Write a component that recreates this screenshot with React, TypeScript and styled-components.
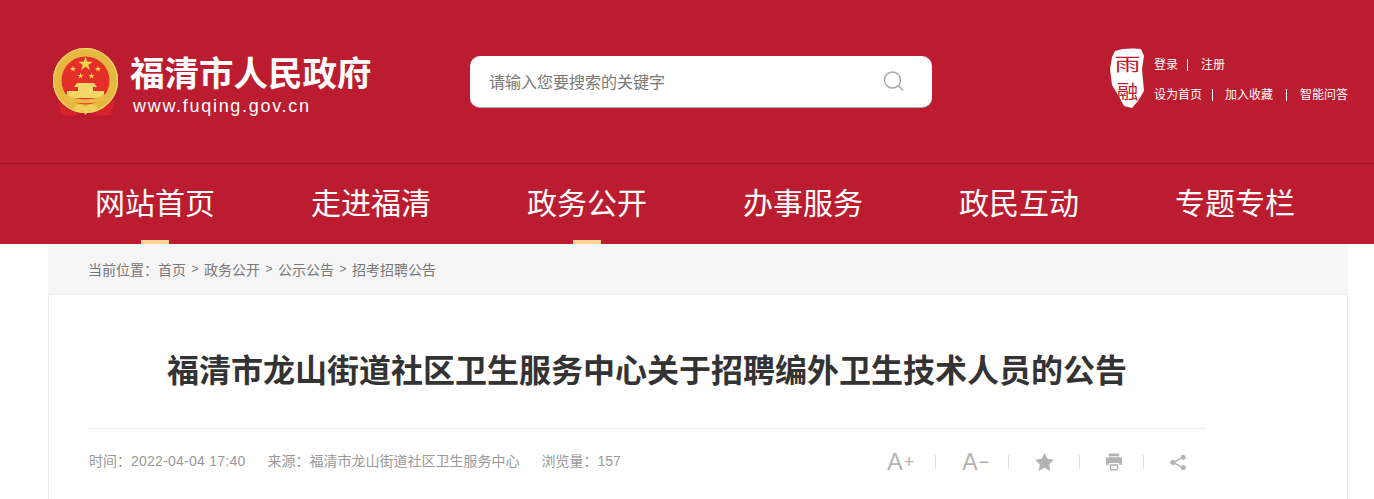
import React from 'react';
import styled, { createGlobalStyle } from 'styled-components';

const GlobalStyle = createGlobalStyle`
  html, body {
    margin: 0;
    padding: 0;
    background: #fff;
  }
  body {
    font-family: "Liberation Sans", "Noto Sans CJK SC", sans-serif;
    overflow: hidden;
  }
  a {
    color: inherit;
    text-decoration: none;
  }
`;

const Page = styled.div`
  height: 499px;
  overflow: hidden;
`;

const Top = styled.header`
  background: #bc1c2f;
`;

const TopInner = styled.div`
  box-sizing: border-box;
  padding: 0 26px 0 52px;
  display: flex;
  align-items: flex-start;
  border-bottom: 1px solid #a01525;
  height: 164px;
`;

const Brand = styled.div`
  display: flex;
  width: 418px;
  padding-top: 47px;
`;

const BrandText = styled.div`
  margin-left: 11px;
  color: #fff;
`;

const BrandName = styled.div`
  font-size: 34.5px;
  line-height: 50px;
  margin-top: 2px;
  font-weight: 700;
  white-space: nowrap;
`;

const BrandUrl = styled.div`
  font-size: 18px;
  line-height: 20px;
  letter-spacing: 1.7px;
  margin: -3px 0 0 3px;
  white-space: nowrap;
`;

const SearchBox = styled.div`
  width: 462px;
  height: 52px;
  margin-top: 56px;
  box-sizing: border-box;
  padding: 0 28px 2px 19px;
  background: #fff;
  border-bottom: 1px solid #aaa;
  border-radius: 10px;
  display: flex;
  align-items: center;
  justify-content: space-between;
  font-size: 16px;
  color: #777;
`;

const Links = styled.div`
  display: flex;
  margin-left: auto;
  padding-top: 47px;
`;

const LinkRows = styled.div`
  margin-left: 9px;
  padding-top: 4px;
  color: #fff;
  font-size: 12px;
`;

const LinkRow = styled.div`
  display: flex;
  height: 30px;
  line-height: 28px;
  white-space: nowrap;
`;

const Bar = styled.i<{ $left: number; $right: number }>`
  width: 1px;
  height: 12px;
  margin: 8px ${p => p.$right}px 0 ${p => p.$left}px;
  background: #fff;
`;

const Nav = styled.nav`
  display: grid;
  grid-template-columns: repeat(6, 216px);
  padding-left: 47px;
  height: 80px;
`;

const NavItem = styled.a<{ $active?: boolean }>`
  position: relative;
  text-align: center;
  font-size: 30px;
  line-height: 80px;
  color: #fff;
  white-space: nowrap;

  &::after {
    content: '';
    display: ${p => (p.$active ? 'block' : 'none')};
    position: absolute;
    left: 50%;
    bottom: 0;
    width: 28px;
    height: 4px;
    margin-left: -14px;
    background: #ffd48c;
  }
`;

const Main = styled.main`
  width: 1300px;
  margin-left: 48px;
`;

const Crumbs = styled.div`
  height: 51px;
  box-sizing: border-box;
  padding-left: 40px;
  background: #f6f6f6;
  border-bottom: 1px solid #ececec;
  display: flex;
  align-items: center;
  font-size: 14px;
  color: #777;
`;

const CrumbSep = styled.span`
  width: 18px;
  text-align: center;
  font-size: 12px;
`;

const Article = styled.article`
  box-sizing: border-box;
  height: 300px;
  padding: 0 141px 0 40px;
  border: 1px solid #ececec;
  border-top: 0;
`;

const Title = styled.h1`
  margin: 0;
  height: 134px;
  box-sizing: border-box;
  padding: 51px 1px 0 0;
  border-bottom: 1px solid #ececec;
  font-size: 32px;
  line-height: 50px;
  font-weight: 700;
  color: #333;
  text-align: center;
  white-space: nowrap;
`;

const Meta = styled.div`
  display: flex;
  align-items: center;
  height: 62px;
  font-size: 14px;
  color: #999;
`;

const MetaItem = styled.span`
  margin-right: 22px;
  white-space: nowrap;
`;

const MetaTime = styled.span`
  letter-spacing: 0.25px;
`;

const Tools = styled.div`
  display: flex;
  align-items: center;
  margin: 4px 20px 0 auto;
  color: #b3b3b3;
`;

const Tool = styled.span<{ $pad?: number }>`
  display: flex;
  align-items: center;
  height: 14px;
  padding-right: ${p => p.$pad ?? 0}px;
  margin-right: ${p => (p.$pad ? 26 : 0)}px;
  border-right: ${p => (p.$pad ? '1px solid #ddd' : 0)};
  font-size: 23px;
  line-height: 14px;
`;

const Sign = styled.span`
  font-size: 18px;
  margin-left: 1px;
`;

const EmblemStar = ({ x, y, r }: { x: number; y: number; r: number }) => (
  <polygon
    transform={`translate(${x} ${y}) scale(${r})`}
    points="0,-1 .24,-.31 .95,-.31 .38,.12 .59,.81 0,.38 -.59,.81 -.38,.12 -.95,-.31 -.24,-.31"
    fill="#f7d24f"
  />
);

const Emblem = () => (
  <svg width="67" height="71" viewBox="0 0 67 71">
    <path d="M12 50 L7 55 L9 68 L20 69 L33.5 64 L47 69 L59 68 L62 55 L56 50 Z" fill="#d8222a" />
    <circle cx="33.5" cy="33.5" r="28" fill="none" stroke="#e6b83f" strokeWidth="9" />
    <circle cx="33.5" cy="33.5" r="32" fill="none" stroke="#f6d96f" strokeWidth="1.2" />
    <circle cx="33.5" cy="33.5" r="24" fill="#e5302a" />
    <EmblemStar x={33.5} y={17} r={7.5} />
    <EmblemStar x={21} y={22} r={3.2} />
    <EmblemStar x={46} y={22} r={3.2} />
    <EmblemStar x={28.5} y={29} r={3.2} />
    <EmblemStar x={39.5} y={29} r={3.2} />
    <path d="M25 36 H42 L45 40 H41 V44 H52 V51 H15 V44 H26 V40 H22 Z" fill="#f5d769" />
    <path d="M11 51 C21 58 46 58 56 51 L53 47 C43 54 24 54 14 47 Z" fill="#e9bb42" />
    <path d="M21 61 C26 56 30 57 33.5 60 C37 57 41 56 46 61 L41 65 L37 63 L33.5 68 L30 63 L26 65 Z" fill="#f3cf5e" />
  </svg>
);

const Seal = () => (
  <svg width="35" height="62" viewBox="0 0 35 62">
    <path d="M5 4 C12 1 24 1 31 2 L34 9 L32 22 L34 44 L28 54 L22 61 L14 59 L8 48 L2 38 L0 22 L2 10 Z" fill="#fff" />
    <text transform="translate(17.5 24) scale(1.45 1)" fontSize="18" textAnchor="middle" fill="#bc1c2f" fontFamily="'Noto Sans CJK SC', sans-serif">雨</text>
    <text transform="translate(17.5 52) scale(1.2 1.1)" fontSize="18" textAnchor="middle" fill="#bc1c2f" fontFamily="'Noto Sans CJK SC', sans-serif">融</text>
  </svg>
);

const SearchIcon = () => (
  <svg width="21" height="20" viewBox="0 0 21 20" fill="none" stroke="#a5a5a5" strokeWidth="1.4">
    <circle cx="9.5" cy="9" r="8" />
    <path d="M15.5 15 L20 19.5" />
  </svg>
);

const StarIcon = () => (
  <svg width="19" height="18" viewBox="0 0 20 19" fill="#b3b3b3">
    <path d="M10 0 L13 6.2 L20 7.2 L15 12 L16.2 19 L10 15.7 L3.8 19 L5 12 L0 7.2 L7 6.2 Z" />
  </svg>
);

const PrintIcon = () => (
  <svg width="16" height="18" viewBox="0 0 17 18" fill="#b3b3b3">
    <path d="M3 0 H14 V3 H3 Z" />
    <path d="M1.5 4 H15.5 Q17 4 17 5.5 V12 H14 V10 H3 V12 H0 V5.5 Q0 4 1.5 4 Z" />
    <path d="M4 11.5 H13 V16.5 Q13 18 11.5 18 H5.5 Q4 18 4 16.5 Z M5.5 13 V16.5 H11.5 V13 Z" fillRule="evenodd" />
  </svg>
);

const ShareIcon = () => (
  <svg width="16" height="17" viewBox="0 0 17 17" fill="#b3b3b3" stroke="#b3b3b3">
    <circle cx="14" cy="3" r="2.3" />
    <circle cx="3" cy="8.5" r="2.3" />
    <circle cx="14" cy="14" r="2.3" />
    <path d="M14 3 L3 8.5 L14 14" fill="none" strokeWidth="1.5" />
  </svg>
);

const navItems = [
  { label: '网站首页', active: true },
  { label: '走进福清' },
  { label: '政务公开', active: true },
  { label: '办事服务' },
  { label: '政民互动' },
  { label: '专题专栏' },
];

const App = () => {
  return (
    <Page>
      <GlobalStyle />
      <Top>
        <TopInner>
          <Brand>
            <Emblem />
            <BrandText>
              <BrandName>福清市人民政府</BrandName>
              <BrandUrl>www.fuqing.gov.cn</BrandUrl>
            </BrandText>
          </Brand>
          <SearchBox>
            请输入您要搜索的关键字
            <SearchIcon />
          </SearchBox>
          <Links>
            <Seal />
            <LinkRows>
              <LinkRow>
                登录<Bar $left={9} $right={13} />注册
              </LinkRow>
              <LinkRow>
                设为首页<Bar $left={10} $right={12} />加入收藏<Bar $left={13} $right={13} />智能问答
              </LinkRow>
            </LinkRows>
          </Links>
        </TopInner>
        <Nav>
          {navItems.map(item => (
            <NavItem key={item.label} $active={item.active}>
              {item.label}
            </NavItem>
          ))}
        </Nav>
      </Top>
      <Main>
        <Crumbs>
          当前位置：首页<CrumbSep>&gt;</CrumbSep>政务公开<CrumbSep>&gt;</CrumbSep>公示公告<CrumbSep>&gt;</CrumbSep>招考招聘公告
        </Crumbs>
        <Article>
          <Title>福清市龙山街道社区卫生服务中心关于招聘编外卫生技术人员的公告</Title>
          <Meta>
            <MetaItem>时间：<MetaTime>2022-04-04 17:40</MetaTime></MetaItem>
            <MetaItem>来源：福清市龙山街道社区卫生服务中心</MetaItem>
            <MetaItem>浏览量：157</MetaItem>
            <Tools>
              <Tool $pad={21}>A<Sign>+</Sign></Tool>
              <Tool $pad={19}>A<Sign>−</Sign></Tool>
              <Tool $pad={25}><StarIcon /></Tool>
              <Tool $pad={21}><PrintIcon /></Tool>
              <Tool><ShareIcon /></Tool>
            </Tools>
          </Meta>
        </Article>
      </Main>
    </Page>
  );
};

export default App;
